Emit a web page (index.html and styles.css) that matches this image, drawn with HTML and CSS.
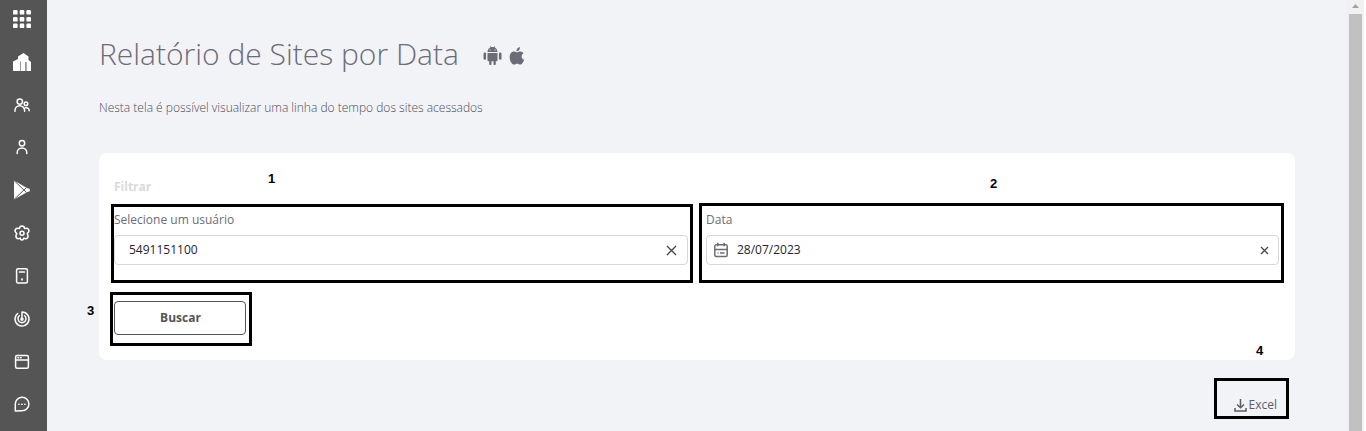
FILE: index.html
```html
<!DOCTYPE html>
<html lang="pt-BR">
<head>
<meta charset="utf-8">
<title>Relatório de Sites por Data</title>
<link rel="stylesheet" href="styles.css">
</head>
<body>
<div class="app">
  <nav class="sidebar">
    <svg class="nav-icon" viewBox="0 0 24 24" fill="#fff"><rect x="3" y="3" width="4.600" height="4.600" rx="1.200"/><rect x="9.700" y="3" width="4.600" height="4.600" rx="1.200"/><rect x="16.400" y="3" width="4.600" height="4.600" rx="1.200"/><rect x="3" y="10" width="4.600" height="4.600" rx="1.200"/><rect x="9.700" y="10" width="4.600" height="4.600" rx="1.200"/><rect x="16.400" y="10" width="4.600" height="4.600" rx="1.200"/><rect x="3" y="16.500" width="4.600" height="4.600" rx="1.200"/><rect x="9.700" y="16.500" width="4.600" height="4.600" rx="1.200"/><rect x="16.400" y="16.500" width="4.600" height="4.600" rx="1.200"/></svg>
    <svg class="nav-icon" viewBox="0 0 24 24"><path fill="#fff" d="M3 21v-9.500L8 9V6.500L13.500 3 18.500 6.500V10l2.500 2v9h-4.500v-9h-1.300v9z"/><path d="M10.500 11.500V21M15.500 12v9" stroke="#999" stroke-width="1"/></svg>
    <svg class="nav-icon line" viewBox="0 0 24 24"><circle cx="9.800" cy="8.600" r="2.700"/><circle cx="16" cy="10.800" r="1.800"/><path d="M5 18.300v-.8a4.800 4.800 0 0 1 9.600 0v.8M15.500 14.800c2.200-.4 3.700 1 3.700 3"/></svg>
    <svg class="nav-icon line" viewBox="0 0 24 24"><circle cx="12" cy="8.300" r="2.700"/><path d="M7.200 18.500v-.8a4.800 4.800 0 0 1 9.600 0v.8"/></svg>
    <svg class="nav-icon" viewBox="0 0 24 24"><path fill="#fff" d="M4 2.500 17.500 10.300q2.500.2 2.500 1.900t-2.500 1.900L4 21.500z"/><path d="m4 2.500 12.500 12M4 21.500l12.500-12" stroke="#555" stroke-width="1"/></svg>
    <svg class="nav-icon line" viewBox="0 0 24 24"><path d="M9.400 7.600Q9.700 5 12 5t2.600 2.600q2.800-.8 4 .9 1.200 2-1.400 4.100 1.600 2.700.3 4.300-1.400 1.400-3.700.2-.4 2-1.800 2t-1.800-2q-2.300 1.200-3.700-.2-1.300-1.600.3-4.300-2.600-2.100-1.400-4.100 1.200-1.700 4-.9Z"/><circle cx="12" cy="12.300" r="2"/></svg>
    <svg class="nav-icon line" viewBox="0 0 24 24"><rect x="6.600" y="4.800" width="10.800" height="14.200" rx="1.500"/><path d="M9.500 8h5"/><circle cx="12" cy="15.500" r=".4"/></svg>
    <svg class="nav-icon line" viewBox="0 0 24 24"><path d="M12 12V5a7 7 0 1 1-4.300 1.500M9.300 8.800a4 4 0 1 0 5.400 0"/><circle cx="12" cy="12.300" r="1"/></svg>
    <svg class="nav-icon line" viewBox="0 0 24 24"><rect x="5.600" y="6.500" width="12.800" height="12.700" rx="1.500"/><path d="M5.600 10.900h12.800M8 8.700h.6M10.500 8.700h.6"/></svg>
    <svg class="nav-icon line" viewBox="0 0 24 24"><path d="M5.300 19V12a6.800 6.800 0 1 1 6.800 6.800z"/><path d="M8.800 12.300h.3M11.800 12.300h.3M14.800 12.300h.3"/></svg>
  </nav>
  <main class="content">
    <header class="heading">
      <h1>Relatório de Sites por Data</h1>
      <svg class="android" viewBox="0 0 18 19"><path d="M4 6.100C4 3.800 5.500 2 7 1.300L6.300.2l.5-.2.700 1.100q1.500-.4 3 0l.7-1.100.5.2-.7 1.100c1.500.7 3 2.500 3 4.800zM4 7h10v7.500q0 .8-.8.800h-.9V18a1.150 1.150 0 0 1-2.300 0v-2.700H8V18a1.150 1.150 0 0 1-2.300 0v-2.700h-.9q-.8 0-.8-.8z"/><rect x="0" y="6.500" width="2.600" height="7.200" rx="1.300"/><rect x="15.400" y="6.500" width="2.600" height="7.200" rx="1.300"/><path fill="#f2f3f7" d="M6 3.500h1v1H6zM11 3.500h1v1h-1z"/></svg>
      <svg class="apple" viewBox="0 0 16 19"><path d="M11 0q.3 2-.9 3.300Q9 4.600 7.500 4.500q-.1-1.800 1-3.100Q9.500.2 11 0ZM8 5.600c1 0 1.900-.9 3.600-.8q2.200.1 3.400 1.900c-3.100 1.900-2.500 5.700.5 6.900-.8 2.200-2.300 4.900-4 4.900-1.300 0-1.700-.8-3.300-.8s-2 .8-3.200.8C2.600 18.500.3 14.500.3 10.700.3 7 2.500 4.800 4.700 4.800c1.500 0 2.400.8 3.300.8Z"/></svg>
    </header>
    <p class="intro">Nesta tela é possível visualizar uma linha do tempo dos sites acessados</p>
    <section class="card">
      <h2>Filtrar</h2>
      <div class="fields">
        <div class="field">
          <label>Selecione um usuário</label>
          <div class="input user"><span>5491151100</span><svg class="clear" viewBox="0 0 11 11"><path d="m1 1 9 9M10 1l-9 9"/></svg></div>
        </div>
        <div class="field">
          <label>Data</label>
          <div class="input date"><svg class="calendar" viewBox="0 0 14 16"><rect x=".8" y="2.800" width="12.400" height="11.800" rx="1.500"/><path d="M3.800.7v3.600M10.200.7v3.600M1 7.500h12M3.500 11h1M6 11h4.500"/></svg><span>28/07/2023</span><svg class="clear small" viewBox="0 0 9 9"><path d="m1 1 7 7M8 1 1 8"/></svg></div>
        </div>
      </div>
      <button class="search">Buscar</button>
    </section>
    <div class="export"><svg class="download" viewBox="0 0 13 13"><path d="M6.500 0v8.500M3 5.500l3.500 3.300L10 5.500M1 9v3h11V9"/></svg><span>Excel</span></div>
  </main>
  <div class="scrollbar"><div class="arrow"></div><div class="thumb"></div></div>
</div>
<div class="mark mark-user"></div><div class="mark mark-date"></div><div class="mark mark-search"></div><div class="mark mark-export"></div>
<span class="num num-1">1</span><span class="num num-2">2</span><span class="num num-3">3</span><span class="num num-4">4</span>
</body>
</html>
```
FILE: styles.css
```css
* { box-sizing: border-box; }
body { margin: 0; background: #fff; font-family: "Open Sans", sans-serif; overflow: hidden; }
.app { display: flex; width: 1364px; height: 431px; background: #f2f3f7; }
.sidebar { width: 47px; background: #555; padding: 7px 0 0 10px; display: flex; flex-direction: column; gap: 18.800px; }
.nav-icon { width: 24px; height: 24px; flex: none; }
.line { fill: none; stroke: #fff; stroke-width: 1.500; stroke-linecap: round; stroke-linejoin: round; }
.content { flex: 1; padding: 32px 52px 0; }
.heading { display: flex; align-items: center; height: 44px; fill: #6c6c78; }
h1 { margin: 0 24px 0 0; font-size: 30px; line-height: 44px; font-weight: 300; color: #6c6c78; white-space: nowrap; }
.android { width: 19px; height: 19px; margin: 2px 7px 0 0; }
.apple { width: 16px; height: 18px; margin-top: 3px; }
.intro { margin: 22px 0 0; font-size: 12px; line-height: 20px; font-weight: 300; color: #4c4c58; }
.card { margin-top: 35px; height: 207px; padding: 24px 16px 0 15px; background: #fff; border-radius: 8px; }
h2 { margin: 0; font-size: 12px; line-height: 20px; font-weight: 700; color: #dadade; }
.fields { display: flex; gap: 18px; margin-top: 13px; }
.field { width: 574px; }
.field:last-child { width: 573px; }
label { display: block; font-size: 12px; line-height: 20px; height: 25px; color: #6c6c78; }
.input { display: flex; align-items: center; height: 30px; border: 1px solid #d8d8dc; border-radius: 4px; font-size: 12px; color: #24242e; }
.input span { padding-bottom: 2px; }
.user { padding: 0 10px 0 14px; }
.date { padding: 0 9px 0 7px; }
.clear { width: 11px; height: 11px; margin-left: auto; fill: none; stroke: #44444c; stroke-width: 1.300; }
.small { width: 9px; height: 9px; }
.calendar { width: 14px; height: 16px; margin-right: 9px; fill: none; stroke: #6c6c78; stroke-width: 1.500; }
.search { display: block; width: 132px; height: 34px; margin-top: 36px; padding: 0 0 2px 1px; border: 1px solid #555; border-radius: 4px; background: #fff; font: 700 12px "Open Sans", sans-serif; color: #555; }
.export { display: flex; justify-content: flex-end; align-items: center; gap: 2px; height: 20px; margin-top: 35px; padding-right: 18px; font-size: 12px; color: #5c5c68; }
.export span { padding-bottom: 2px; }
.download { width: 13px; height: 13px; fill: none; stroke: #5c5c68; stroke-width: 1.500; }
.scrollbar { width: 17px; background: #f1f1f1; padding: 4px 2px 0; }
.arrow { width: 7px; height: 4px; margin: 0 auto 6px; background: #a3a3a3; clip-path: polygon(50% 0, 100% 100%, 0 100%); }
.thumb { height: 417px; background: #c1c1c1; }
.mark { position: absolute; border: 3px solid #000; }
.mark-user { left: 111px; top: 204px; width: 582px; height: 79px; }
.mark-date { left: 699px; top: 203px; width: 585px; height: 80px; }
.mark-search { left: 110px; top: 292px; width: 142px; height: 54px; }
.mark-export { left: 1214px; top: 378px; width: 75px; height: 41px; }
.num { position: absolute; font: 700 13px/14px "Liberation Sans", sans-serif; color: #000; }
.num-1 { left: 268px; top: 172px; }
.num-2 { left: 990px; top: 177px; }
.num-3 { left: 87px; top: 304px; }
.num-4 { left: 1256px; top: 344px; }
```
